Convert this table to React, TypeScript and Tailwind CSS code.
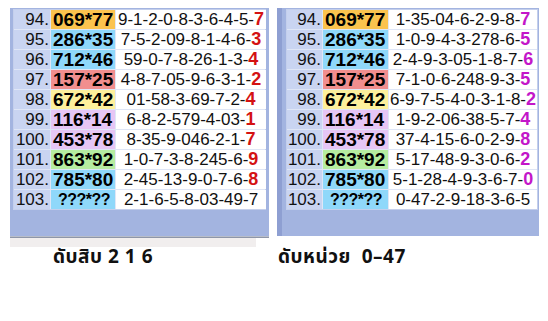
import React from 'react';

interface Row {
  no: string;
  pair: string;
  bg: string;
  seq: string;
  last: string;
}

const colors = {
  orange: 'bg-[#fbc34e]',
  sky: 'bg-[#8fd8fa]',
  rose: 'bg-[#f18e8e]',
  yellow: 'bg-[#fdf09c]',
  lilac: 'bg-[#e6c6f5]',
  green: 'bg-[#b6eca0]',
};

const leftRows: Row[] = [
  { no: '94.', pair: '069*77', bg: colors.orange, seq: '9-1-2-0-8-3-6-4-5-', last: '7' },
  { no: '95.', pair: '286*35', bg: colors.sky, seq: '7-5-2-09-8-1-4-6-', last: '3' },
  { no: '96.', pair: '712*46', bg: colors.sky, seq: '59-0-7-8-26-1-3-', last: '4' },
  { no: '97.', pair: '157*25', bg: colors.rose, seq: '4-8-7-05-9-6-3-1-', last: '2' },
  { no: '98.', pair: '672*42', bg: colors.yellow, seq: '01-58-3-69-7-2-', last: '4' },
  { no: '99.', pair: '116*14', bg: colors.lilac, seq: '6-8-2-579-4-03-', last: '1' },
  { no: '100.', pair: '453*78', bg: colors.lilac, seq: '8-35-9-046-2-1-', last: '7' },
  { no: '101.', pair: '863*92', bg: colors.green, seq: '1-0-7-3-8-245-6-', last: '9' },
  { no: '102.', pair: '785*80', bg: colors.sky, seq: '2-45-13-9-0-7-6-', last: '8' },
  { no: '103.', pair: '???*??', bg: colors.sky, seq: '2-1-6-5-8-03-49-7', last: '' },
];

const rightRows: Row[] = [
  { no: '94.', pair: '069*77', bg: colors.orange, seq: '1-35-04-6-2-9-8-', last: '7' },
  { no: '95.', pair: '286*35', bg: colors.sky, seq: '1-0-9-4-3-278-6-', last: '5' },
  { no: '96.', pair: '712*46', bg: colors.sky, seq: '2-4-9-3-05-1-8-7-', last: '6' },
  { no: '97.', pair: '157*25', bg: colors.rose, seq: '7-1-0-6-248-9-3-', last: '5' },
  { no: '98.', pair: '672*42', bg: colors.yellow, seq: '6-9-7-5-4-0-3-1-8-', last: '2' },
  { no: '99.', pair: '116*14', bg: colors.lilac, seq: '1-9-2-06-38-5-7-', last: '4' },
  { no: '100.', pair: '453*78', bg: colors.lilac, seq: '37-4-15-6-0-2-9-', last: '8' },
  { no: '101.', pair: '863*92', bg: colors.green, seq: '5-17-48-9-3-0-6-', last: '2' },
  { no: '102.', pair: '785*80', bg: colors.sky, seq: '5-1-28-4-9-3-6-7-', last: '0' },
  { no: '103.', pair: '???*??', bg: colors.sky, seq: '0-47-2-9-18-3-6-5', last: '' },
];

function StatTable({ rows, lastColor, cols }: { rows: Row[]; lastColor: string; cols: string }) {
  return (
    <div className={`grid ${cols} gap-px bg-[#dfe6f6] border border-[#c4cfec]`}>
      {rows.map((r) => {
        const unknown = r.pair.startsWith('?');
        return (
          <React.Fragment key={r.no}>
            <div className="h-[19px] bg-[#c9d4f1] text-right pr-[1px] text-[17px] leading-[19px] text-[#111]">{r.no}</div>
            <div
              className={`h-[19px] ${r.bg} font-bold text-black whitespace-nowrap leading-[19px] ${
                unknown ? 'pl-[7px] text-[16px] tracking-[-0.5px]' : 'pl-[2px] text-[19px]'
              }`}
            >
              {r.pair}
            </div>
            <div className="h-[19px] bg-white text-center text-[17px] leading-[19px] text-[#111] whitespace-nowrap">
              {r.seq}
              {r.last && <span className={`font-bold text-[18px] ${lastColor}`}>{r.last}</span>}
            </div>
          </React.Fragment>
        );
      })}
    </div>
  );
}

export default function App() {
  return (
    <main className="w-[548px] h-[321px] bg-white font-['Liberation_Sans',sans-serif] overflow-hidden">
      <div className="flex pt-[8px]">
        {/* left panel */}
        <div className="ml-[10px] w-[259px] flex flex-col">
          <div className="h-[228px] bg-[#a3b4e0] pl-[3px] pt-[1px]">
            <div className="w-[253px]">
              <StatTable rows={leftRows} lastColor="text-[#d41212]" cols="grid-cols-[36px_64px_150px]" />
            </div>
          </div>
          <div className="h-px bg-[#b8bdc9]" />
          <div className="h-px bg-[#8e96a8]" />
          <div className="w-[246px] h-[9px] bg-[#f1eeee]" />
        </div>

        {/* right panel */}
        <div className="ml-[8px] w-[262px] h-[228px] bg-[#a3b4e0] flex">
          <div className="w-[5px] bg-[#8e9fd2]" />
          <div className="pl-[4px] pt-[1px]">
            <StatTable rows={rightRows} lastColor="text-[#c316c9]" cols="grid-cols-[35px_65px_148px]" />
          </div>
        </div>
      </div>

      <div className="flex -mt-[3px] text-[19px] font-bold text-[#111] font-['Tahoma','Noto_Sans_Thai','Loma','Liberation_Sans',sans-serif]">
        <div className="ml-[53px] w-[225px] tracking-[0.5px]">ดับสิบ 2 1 6</div>
        <div className="tracking-[0.5px]">ดับหน่วย&nbsp; 0–47</div>
      </div>
    </main>
  );
}
